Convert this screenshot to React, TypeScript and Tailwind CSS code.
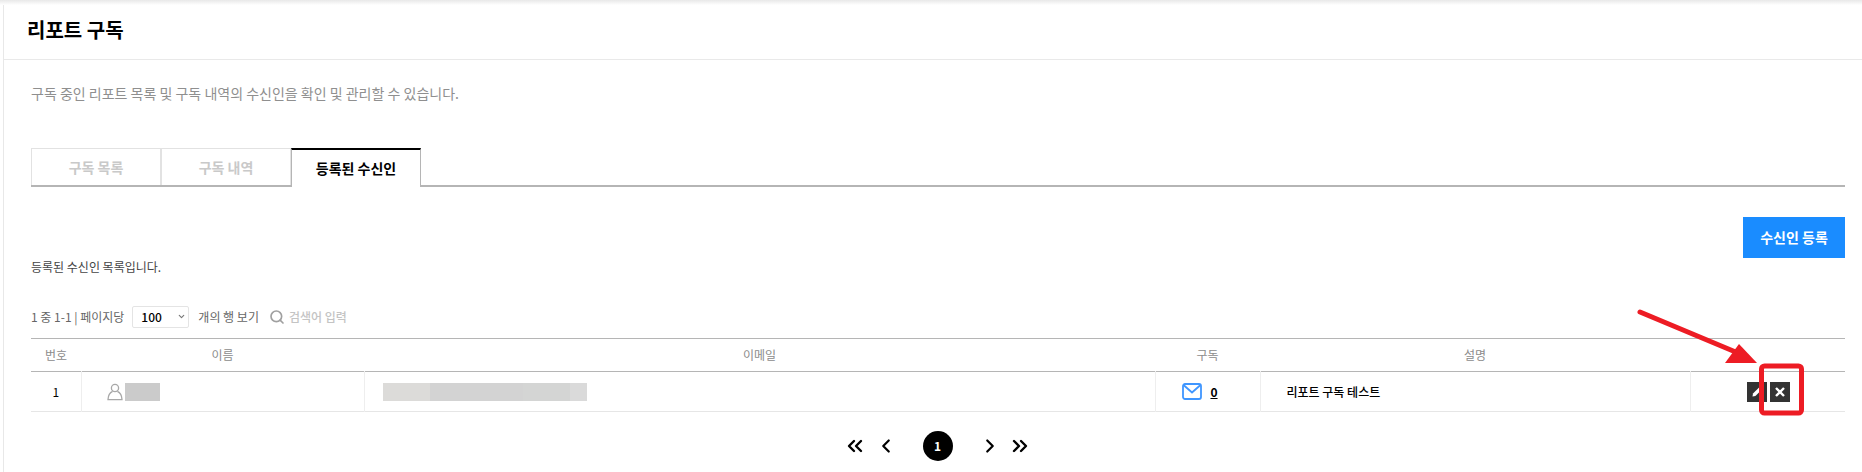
import React from "react";
import { Search, ChevronDown, ChevronLeft, ChevronRight, ChevronsLeft, ChevronsRight } from "lucide-react";

const font = "font-['Noto_Sans_CJK_KR','Noto_Sans',sans-serif]";

const tabs = [
  { label: "구독 목록", active: false },
  { label: "구독 내역", active: false },
  { label: "등록된 수신인", active: true },
];

const App: React.FC = () => {
  return (
    <div className={`relative h-[472px] w-[1862px] overflow-hidden bg-white ${font}`}>
      <div className="h-[5px] bg-gradient-to-b from-[#e8e8e8] to-white" />
      <div className="ml-[3px] h-[467px] border-l border-[#e8e8e8]">
        <div className="flex h-[55px] items-center border-b border-[#e9e9e9] pb-[5px] pl-[23px]">
          <h1 className="text-[20px] font-bold text-black">리포트 구독</h1>
        </div>
        <div className="pl-[27px] pr-[17px]">
          <p className="mt-[22px] h-[22px] text-[14px] leading-[22px] text-[#8f8f8f]">
            구독 중인 리포트 목록 및 구독 내역의 수신인을 확인 및 관리할 수 있습니다.
          </p>

          <div className="mt-[44px] flex h-[39px] border-b-2 border-[#b5b5b5]">
            {tabs.map((t) => (
              <div
                key={t.label}
                className={
                  t.active
                    ? "relative z-10 flex h-[39px] w-[130px] items-center justify-center border-x border-t-2 border-x-[#b5b5b5] border-t-black bg-white text-[14px] font-bold text-black"
                    : "flex h-[37px] w-[130px] items-center justify-center border-x border-t border-[#e2e2e2] text-[14px] font-bold text-[#c9c9c9]"
                }
              >
                {t.label}
              </div>
            ))}
          </div>

          <div className="mt-[30px] flex justify-end">
            <button className="h-[41px] w-[102px] bg-[#1a8cff] text-[14px] font-bold text-white">수신인 등록</button>
          </div>
          <p className="mt-0 h-[18px] text-[12px] leading-[18px] text-[#444]">등록된 수신인 목록입니다.</p>

          <div className="mt-[28px] flex h-[26px] items-center text-[12px] text-[#666]">
            <span>1 중 1-1 | 페이지당</span>
            <div className="relative ml-[8px] h-[22px] w-[57px]">
              <select
                defaultValue="100"
                className="h-full w-full appearance-none rounded-[2px] border border-[#e4e4e4] bg-white pl-[8px] text-[12px] font-medium text-black"
              >
                <option value="100">100</option>
              </select>
              <ChevronDown className="pointer-events-none absolute right-[3px] top-[6px] text-[#777]" size={9} strokeWidth={3} />
            </div>
            <span className="ml-[9px]">개의 행 보기</span>
            <Search className="ml-[10px] text-[#a0a0a0]" size={16} strokeWidth={2.5} />
            <span className="ml-[4px] text-[12px] font-medium text-[#c4c4c4]">검색어 입력</span>
          </div>

          <table className="mt-[8px] w-full table-fixed border-collapse border-t border-[#b5b5b5] text-[12px]">
            <colgroup>
              <col className="w-[50px]" />
              <col className="w-[283px]" />
              <col className="w-[791px]" />
              <col className="w-[105px]" />
              <col className="w-[430px]" />
              <col />
            </colgroup>
            <thead>
              <tr className="h-[33px] border-b border-[#b5b5b5] text-[#8c8c8c]">
                <th className="font-normal">번호</th>
                <th className="font-normal">이름</th>
                <th className="font-normal">이메일</th>
                <th className="font-normal">구독</th>
                <th className="font-normal">설명</th>
                <th className="font-normal" />
              </tr>
            </thead>
            <tbody>
              <tr className="h-[40px] border-b border-[#e6e6e6] text-black">
                <td className="border-r border-[#eeeeee] text-center">1</td>
                <td className="border-r border-[#eeeeee] pl-[25px]">
                  <div className="flex items-center">
                    {/* person outline */}
                    <svg width={16} height={18} viewBox="0 0 16 18" fill="none" stroke="#a8a8a8" strokeWidth={1.3}>
                      <circle cx={8} cy={5} r={3.6} />
                      <path d="M5.6 8.4 C3 9.6 1.2 11.8 1 16.6 H15 C14.8 11.8 13 9.6 10.4 8.4" />
                    </svg>
                    <span className="ml-[2px] h-[18px] w-[35px] bg-[#cbcbcb]" />
                  </div>
                </td>
                <td className="border-r border-[#eeeeee] pl-[18px]">
                  <div className="flex h-[18px] w-[204px]">
                    <span className="w-[47px] bg-[#dcdbd9]" />
                    <span className="w-[93px] bg-[#d3d3d3]" />
                    <span className="w-[47px] bg-[#d4d5d4]" />
                    <span className="w-[17px] bg-[#dadada]" />
                  </div>
                </td>
                <td className="border-r border-[#eeeeee]">
                  <div className="flex items-center justify-center gap-[8px] pr-[15px]">
                    {/* mail */}
                    <svg width={20} height={17} viewBox="0 0 20 17" fill="none" stroke="#3f96ff" strokeWidth={1.8}>
                      <rect x={1} y={1} width={18} height={15} rx={2} />
                      <path d="M1.5 2 L10 9.5 L18.5 2" />
                    </svg>
                    <span className="font-bold underline">0</span>
                  </div>
                </td>
                <td className="border-r border-[#eeeeee] pl-[26px] text-[12px] font-medium">리포트 구독 테스트</td>
                <td>
                  <div className="flex justify-center gap-[3px] pl-[2px]">
                    <span className="flex h-[20px] w-[20px] items-center justify-center bg-[#333]">
                      {/* pencil */}
                      <svg width={11} height={11} viewBox="0 0 11 11" fill="white">
                        <path d="M0.5 10.5 L1 7.6 L7.6 1 L10 3.4 L3.4 10 Z" />
                      </svg>
                    </span>
                    <span className="flex h-[20px] w-[20px] items-center justify-center bg-[#333]">
                      {/* close */}
                      <svg width={10} height={10} viewBox="0 0 10 10" stroke="white" strokeWidth={2.4}>
                        <path d="M1 1 L9 9 M9 1 L1 9" />
                      </svg>
                    </span>
                  </div>
                </td>
              </tr>
            </tbody>
          </table>

          <div className="mt-[19px] flex items-center justify-center text-black">
            <ChevronsLeft className="-ml-[2px]" size={24} strokeWidth={2.4} />
            <ChevronLeft className="ml-[8px]" size={22} strokeWidth={2.4} />
            <span className="ml-[26px] flex h-[30px] w-[30px] items-center justify-center rounded-full bg-black text-[12px] font-bold text-white">1</span>
            <ChevronRight className="ml-[26px]" size={22} strokeWidth={2.4} />
            <ChevronsRight className="ml-[7px]" size={24} strokeWidth={2.4} />
          </div>
        </div>
      </div>

      {/* annotation over the table */}
      <svg className="pointer-events-none absolute left-0 top-0" width={1862} height={472}>
        <line x1={1640} y1={312} x2={1738} y2={353} stroke="#ed1c24" strokeWidth={5} strokeLinecap="round" />
        <polygon points="1757,363 1725,363 1739,344" fill="#ed1c24" />
        <rect x={1761.5} y={366} width={40} height={47} rx={3} fill="none" stroke="#ed1c24" strokeWidth={5} />
      </svg>
    </div>
  );
};

export default App;
